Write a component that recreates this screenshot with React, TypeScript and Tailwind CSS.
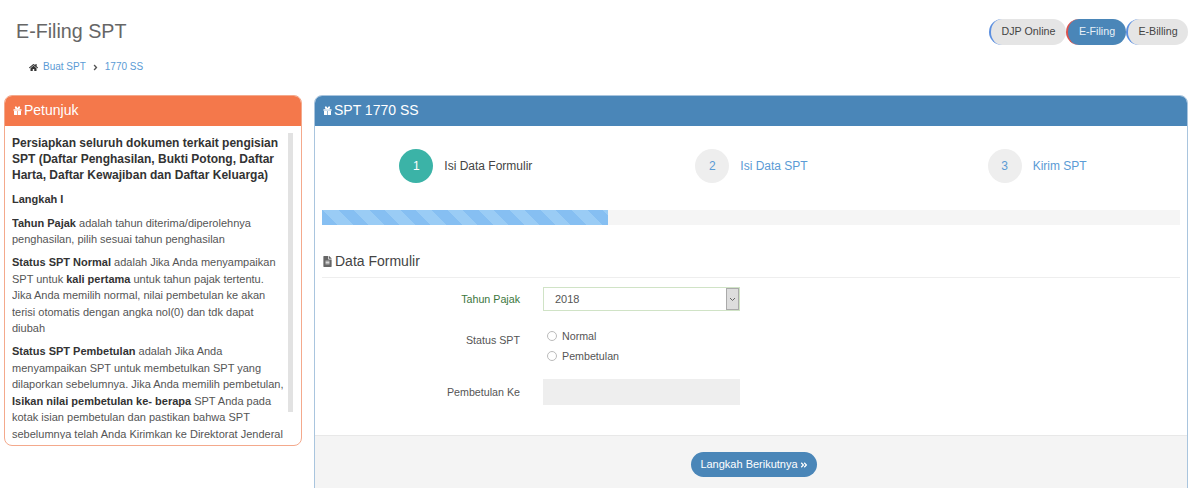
import { FaAngleDoubleRight, FaAngleRight, FaFileAlt, FaHome } from 'react-icons/fa';

const GiftIcon = () => (
  <svg width="9" height="9" viewBox="0 0 9 9" fill="currentColor" className="shrink-0">
    <path d="M.5 3.2h8v1.6h-8zM1 5.1h3.2V9H1.6A.6.6 0 0 1 1 8.4zM4.8 5.1H8v3.3a.6.6 0 0 1-.6.6H4.8z" />
    <path d="M2.4.4C3.3.1 4 1 4.5 2.2 5 1 5.7.1 6.6.4c.9.4.6 2-.6 2.8H3c-1.2-.8-1.5-2.4-.6-2.8z" />
  </svg>
);

const Step = ({ num, label, active }: { num: string; label: string; active?: boolean }) => (
  <div className="flex items-center justify-center gap-[11px]">
    <span
      className={
        active
          ? 'flex h-[34px] w-[34px] items-center justify-center rounded-full bg-[#3bb3a7] text-[12px] text-white'
          : 'flex h-[34px] w-[34px] items-center justify-center rounded-full bg-[#eeeeee] text-[12px] text-[#5b9bd5]'
      }
    >
      {num}
    </span>
    <span className={active ? 'text-[12px] text-[#444]' : 'text-[12px] text-[#5b9bd5]'}>{label}</span>
  </div>
);

const Radio = ({ label }: { label: string }) => (
  <label className="flex h-[20px] items-center gap-[5px] text-[10.7px] text-[#555]">
    <span className="h-[10px] w-[10px] rounded-full border border-[#bbb] bg-white" />
    {label}
  </label>
);

const App = () => (
  <div className="h-[488px] w-[1200px] overflow-hidden bg-white font-['Liberation_Sans',Arial,sans-serif]">
    <div className="flex h-[95px] justify-between pl-4 pr-3">
      <div>
        <h1 className="pt-[18px] text-[19.7px] leading-[26px] font-normal text-[#666]">E-Filing SPT</h1>
        <div className="mt-[15px] ml-[13px] flex items-center gap-[5px] text-[10px] leading-[16px] text-[#5b9bd5]">
          <FaHome className="text-[9px] text-[#333]" />
          <span>Buat SPT</span>
          <FaAngleRight className="text-[9px] text-[#555]" />
          <span>1770 SS</span>
        </div>
      </div>
      <div className="mt-[19px] flex h-[26px] text-[10.7px] leading-[25px]">
        <span className="w-[77px] rounded-full border-l-2 border-[#5b8fe0] bg-[#e5e5e5] text-center text-[#444]">DJP Online</span>
        <span className="w-[60px] rounded-full border-l-2 border-[#d9534f] bg-[#4a86b8] text-center text-[#e8f0f7]">E-Filing</span>
        <span className="w-[62px] rounded-full border-l-2 border-[#5b8fe0] bg-[#e5e5e5] text-center text-[#444]">E-Billing</span>
      </div>
    </div>

    <div className="flex items-start gap-3 pl-1 pr-3">
      <div className="w-[298px] overflow-hidden rounded-[8px] border border-[#f4a98c]">
        <div className="flex h-[30px] items-center gap-[2px] bg-[#f4784b] px-2 pb-[2px] text-[14px] text-white">
          <GiftIcon />
          Petunjuk
        </div>
        <div className="flex h-[319px] gap-[2px] overflow-hidden pt-[7px] pl-[7px]">
          <div className="h-[306px] w-[274px] shrink-0 overflow-hidden pt-[2px] text-[11px] leading-[16.5px] text-[#555]">
            <p className="text-[12px] leading-[16px] font-bold text-[#333]">
              Persiapkan seluruh dokumen terkait pengisian SPT (Daftar Penghasilan, Bukti Potong, Daftar Harta, Daftar Kewajiban dan Daftar Keluarga)
            </p>
            <p className="mt-[8px] font-bold text-[#333]">Langkah I</p>
            <p className="mt-[7px]">
              <b className="text-[#333]">Tahun Pajak</b> adalah tahun diterima/diperolehnya penghasilan, pilih sesuai tahun penghasilan
            </p>
            <p className="mt-[6.5px]">
              <b className="text-[#333]">Status SPT Normal</b> adalah Jika Anda menyampaikan SPT untuk <b className="text-[#333]">kali pertama</b> untuk tahun pajak tertentu. Jika Anda memilih normal, nilai pembetulan ke akan terisi otomatis dengan angka nol(0) dan tdk dapat diubah
            </p>
            <p className="mt-[6.5px]">
              <b className="text-[#333]">Status SPT Pembetulan</b> adalah Jika Anda menyampaikan SPT untuk membetulkan SPT yang dilaporkan sebelumnya. Jika Anda memilih pembetulan, <b className="text-[#333]">Isikan nilai pembetulan ke- berapa</b> SPT Anda pada kotak isian pembetulan dan pastikan bahwa SPT sebelumnya telah Anda Kirimkan ke Direktorat Jenderal
            </p>
          </div>
          <div className="h-[279px] w-[5px] shrink-0 bg-[#e2e2e2]" />
        </div>
      </div>

      <div className="h-[420px] flex-1 overflow-hidden rounded-[8px] border border-[#a9c5de]">
        <div className="flex h-[30px] items-center gap-[2px] bg-[#4a86b8] px-2 pb-[2px] text-[14px] text-white">
          <GiftIcon />
          SPT 1770 SS
        </div>
        <div className="h-[309px] px-[7px]">
          <div className="grid grid-cols-3 pt-[23px] pl-[1px]">
            <Step num="1" label="Isi Data Formulir" active />
            <Step num="2" label="Isi Data SPT" />
            <Step num="3" label="Kirim SPT" />
          </div>
          <div className="mt-[27px] h-[15px] bg-[#f5f5f5]">
            <div className="h-full w-1/3 bg-[repeating-linear-gradient(45deg,#86bff2_0,#86bff2_11px,#9accf5_11px,#9accf5_22px)]" />
          </div>
          <div className="mt-[28px] flex items-center gap-[2px] border-b border-[#eeeeee] pb-[7px] text-[14px] leading-[17px] text-[#444]">
            <FaFileAlt className="text-[11px] text-[#666]" />
            Data Formulir
          </div>
          <div className="mt-[9px] flex items-center">
            <span className="w-[198px] text-right text-[10.7px] text-[#3c763d]">Tahun Pajak</span>
            <div className="ml-[23px] flex h-[24px] w-[197px] items-center justify-between border border-[#d0e3c6] pl-[11px] text-[11px] text-[#555]">
              2018
              <span className="flex h-full w-[13px] items-center justify-center border border-[#aaa] bg-[#dddddd]">
                <svg width="7" height="5" viewBox="0 0 7 5" fill="none" stroke="#666" strokeWidth="1">
                  <path d="M1 1l2.5 2.5L6 1" />
                </svg>
              </span>
            </div>
          </div>
          <div className="mt-[15px] flex items-start">
            <span className="w-[198px] pt-[4px] text-right text-[10.7px] leading-[20px] text-[#555]">Status SPT</span>
            <div className="ml-[27px]">
              <Radio label="Normal" />
              <Radio label="Pembetulan" />
            </div>
          </div>
          <div className="mt-[13px] flex items-center">
            <span className="w-[198px] text-right text-[10.7px] text-[#555]">Pembetulan Ke</span>
            <div className="ml-[23px] h-[26px] w-[197px] bg-[#eeeeee]" />
          </div>
        </div>
        <div className="flex h-[60px] justify-center border-t border-[#e8e8e8] bg-[#f4f4f4] pt-[16px] pl-[6px]">
          <button className="flex h-[25px] w-[126px] items-center justify-center gap-[2px] rounded-full bg-[#4a86b8] text-[11px] text-white">
            Langkah Berikutnya
            <FaAngleDoubleRight className="text-[8px]" />
          </button>
        </div>
      </div>
    </div>
  </div>
);

export default App;
